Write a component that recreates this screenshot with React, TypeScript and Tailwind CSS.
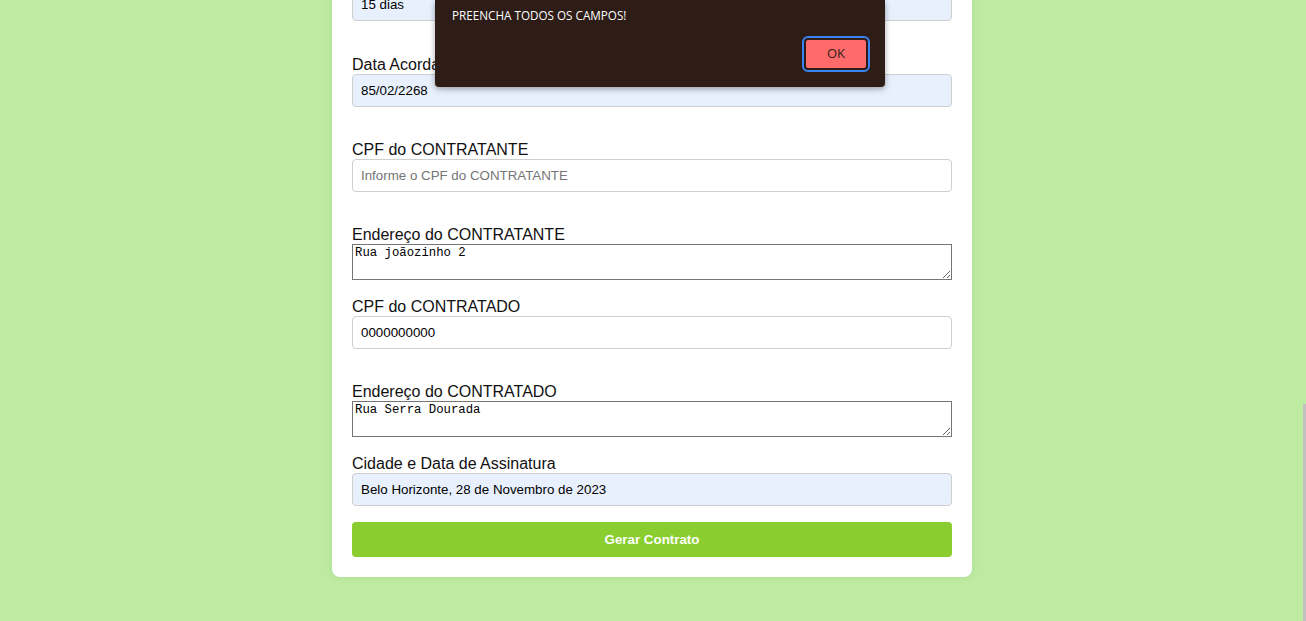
import { useState } from "react";

const labelCls = "block text-[16px] leading-[18px] text-[#111]";
const inputCls =
    "block w-full h-[33px] px-[8px] border border-[#cfcfcf] rounded-[4px] text-[13.33px] text-black outline-none placeholder:text-[#757575]";
const areaCls =
    "block w-full h-[36px] px-[2px] py-[1px] border border-[#767676] text-[12.3px] leading-[15px] text-black outline-none resize-y";

export default function App() {
    const [prazo, setPrazo] = useState("15 dias");
    const [dataAcordada, setDataAcordada] = useState("85/02/2268");
    const [cpfContratante, setCpfContratante] = useState("");
    const [endContratante, setEndContratante] = useState("Rua joãozinho 2");
    const [cpfContratado, setCpfContratado] = useState("0000000000");
    const [endContratado, setEndContratado] = useState("Rua Serra Dourada");
    const [cidade, setCidade] = useState("Belo Horizonte, 28 de Novembro de 2023");

    return (
        <div
            className="relative h-[621px] w-full overflow-hidden bg-[#bdeca1]"
            style={{ fontFamily: '"Liberation Sans", Arial, sans-serif' }}
        >
            <div className="flex justify-center pr-[2px]">
                <form
                    className="w-[640px] -mt-[32px] bg-white rounded-[8px] px-[20px] pt-[20px] pb-[20px] shadow-[0_0_10px_rgba(0,0,0,0.08)]"
                    onSubmit={(e) => e.preventDefault()}
                >
                    <input className={inputCls + " bg-[#e8f0fe]"} value={prazo} onChange={(e) => setPrazo(e.target.value)} />

                    <label className={labelCls + " mt-[35px]"}>Data Acordada</label>
                    <input className={inputCls + " bg-[#e8f0fe]"} value={dataAcordada} onChange={(e) => setDataAcordada(e.target.value)} />

                    <label className={labelCls + " mt-[34px]"}>CPF do CONTRATANTE</label>
                    <input
                        className={inputCls + " bg-white"}
                        placeholder="Informe o CPF do CONTRATANTE"
                        value={cpfContratante}
                        onChange={(e) => setCpfContratante(e.target.value)}
                    />

                    <label className={labelCls + " mt-[34px]"}>Endereço do CONTRATANTE</label>
                    <textarea
                        className={areaCls}
                        style={{ fontFamily: '"Liberation Mono", "DejaVu Sans Mono", monospace' }}
                        value={endContratante}
                        onChange={(e) => setEndContratante(e.target.value)}
                    />

                    <label className={labelCls + " mt-[18px]"}>CPF do CONTRATADO</label>
                    <input className={inputCls + " bg-white"} value={cpfContratado} onChange={(e) => setCpfContratado(e.target.value)} />

                    <label className={labelCls + " mt-[34px]"}>Endereço do CONTRATADO</label>
                    <textarea
                        className={areaCls}
                        style={{ fontFamily: '"Liberation Mono", "DejaVu Sans Mono", monospace' }}
                        value={endContratado}
                        onChange={(e) => setEndContratado(e.target.value)}
                    />

                    <label className={labelCls + " mt-[18px]"}>Cidade e Data de Assinatura</label>
                    <input className={inputCls + " bg-[#e8f0fe]"} value={cidade} onChange={(e) => setCidade(e.target.value)} />

                    <button
                        type="submit"
                        className="mt-[16px] block w-full h-[35px] rounded-[4px] bg-[#89cd2f] text-white font-bold text-[13.33px]"
                    >
                        Gerar Contrato
                    </button>
                </form>
            </div>

            {/* alerta */}
            <div
                className="absolute left-[435px] top-0 w-[450px] h-[87px] bg-[#2d1d16] rounded-b-[4px] shadow-[0_2px_6px_rgba(0,0,0,0.35)] px-[17px] pt-[7px]"
                style={{ fontFamily: '"Open Sans", "Noto Sans", sans-serif' }}
            >
                <p className="text-white text-[11.7px] leading-[16px]">PREENCHA TODOS OS CAMPOS!</p>
                <div className="flex justify-end mt-[15px]">
                    <button className="w-[64px] h-[32px] rounded-[4px] bg-[#ff6b6b] text-[#2d1d16] text-[13px] border-[2px] border-[#2d1d16] outline outline-2 outline-[#3b82f6]">
                        OK
                    </button>
                </div>
            </div>

            {/* barra de rolagem */}
            <div className="absolute right-0 top-[404px] w-[3px] h-[217px] bg-[#c1c1c1]" />
        </div>
    );
}
